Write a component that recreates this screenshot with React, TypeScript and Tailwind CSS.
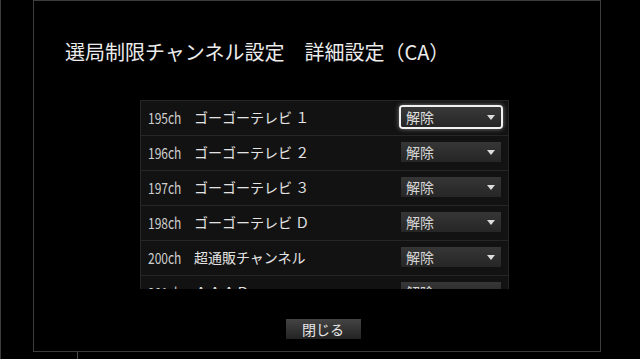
import React from "react";

const rows = [
  { ch: "195ch", name: "ゴーゴーテレビ １", focused: true },
  { ch: "196ch", name: "ゴーゴーテレビ ２" },
  { ch: "197ch", name: "ゴーゴーテレビ ３" },
  { ch: "198ch", name: "ゴーゴーテレビ Ｄ" },
  { ch: "200ch", name: "超通販チャンネル" },
  { ch: "201ch", name: "ＡＡＡＤ" },
];

function Caret() {
  return (
    <svg width="8" height="5" viewBox="0 0 8 5" className="shrink-0">
      <polygon points="0,0 8,0 4,5" fill="#dcdcdc" />
    </svg>
  );
}

function Select({ focused }: { focused?: boolean }) {
  return (
    <div
      className={
        focused
          ? "mr-[7px] flex h-[20px] w-[100px] items-center justify-between rounded-[2px] bg-gradient-to-b from-[#3a3a3a] to-[#262626] pl-[5px] pr-[6px] text-[14px] leading-none text-[#dedede] ring-2 ring-[#f2f2f2] shadow-[0_0_5px_2px_rgba(255,255,255,0.45)]"
          : "mr-[7px] flex h-[20px] w-[100px] items-center justify-between bg-gradient-to-b from-[#363636] to-[#262626] pl-[5px] pr-[6px] text-[14px] leading-none text-[#d6d6d6]"
      }
    >
      <span>解除</span>
      <Caret />
    </div>
  );
}

export default function App() {
  return (
    <div className="relative h-[359px] w-[640px] overflow-hidden border-l border-[#3c3c3c] bg-black font-['Noto_Sans_CJK_JP',sans-serif]">
      {/* stray line below the dialog */}
      <div className="absolute left-[76px] top-[352px] h-[8px] w-px bg-[#4a4a4a]" />

      {/* Dialog */}
      <div className="ml-[32px] flex h-[352px] w-[568px] flex-col border border-[#3c3c3c] bg-black">
        <h1 className="pl-[31px] pt-[40px] text-[20px] leading-[22px] font-normal text-[#ececec] whitespace-pre">
          選局制限チャンネル設定　詳細設定（CA）
        </h1>

        <div className="ml-[106px] mt-[37px] flex w-[369px] flex-col">
          {/* List */}
          <div className="h-[189px] overflow-hidden border border-b-0 border-[#262626] bg-[#121212]">
            {rows.map((r) => (
              <div
                key={r.ch}
                className="flex h-[35px] items-center border-b border-[#262626] pb-[2px]"
              >
                <span className="w-[53px] shrink-0 pl-[7px] leading-none">
                  <span className="inline-block origin-left scale-x-[0.8] text-[15px] text-[#cfcfcf]">
                    {r.ch}
                  </span>
                </span>
                <span className="flex-1 whitespace-pre text-[14px] leading-none text-[#e4e4e4]">
                  {r.name}
                </span>
                <Select focused={r.focused} />
              </div>
            ))}
          </div>

          {/* Close button */}
          <div className="mt-[30px] flex justify-center pr-[3px]">
            <button className="flex h-[20px] w-[75px] items-center justify-center bg-gradient-to-b from-[#444444] to-[#242424] text-[14px] leading-none text-[#e6e6e6]">
              閉じる
            </button>
          </div>
        </div>
      </div>
    </div>
  );
}
